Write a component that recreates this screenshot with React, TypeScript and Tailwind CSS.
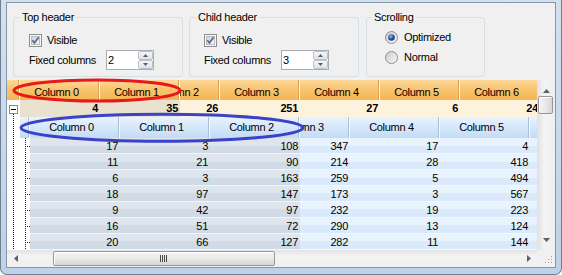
import React from "react";

type Dir = "up" | "down" | "left" | "right";

function Tri({ dir, w = 7, color = "#56616f" }: { dir: Dir; w?: number; color?: string }) {
  const h = Math.ceil(w / 2);
  if (dir === "up")
    return (
      <svg width={w} height={h} className="block">
        <polygon points={`0,${h} ${w / 2},0 ${w},${h}`} fill={color} />
      </svg>
    );
  if (dir === "down")
    return (
      <svg width={w} height={h} className="block">
        <polygon points={`0,0 ${w / 2},${h} ${w},0`} fill={color} />
      </svg>
    );
  if (dir === "left")
    return (
      <svg width={h} height={w} className="block">
        <polygon points={`${h},0 0,${w / 2} ${h},${w}`} fill={color} />
      </svg>
    );
  return (
    <svg width={h} height={w} className="block">
      <polygon points={`0,0 ${h},${w / 2} 0,${w}`} fill={color} />
    </svg>
  );
}

function Checkbox({ id }: { id: string }) {
  return (
    <svg width="13" height="13" className="block shrink-0">
      <defs>
        <linearGradient id={id} x1="0" y1="0" x2="1" y2="1">
          <stop offset="0" stopColor="#cfd3d8" />
          <stop offset="1" stopColor="#f6f6f6" />
        </linearGradient>
      </defs>
      <rect x="0.5" y="0.5" width="12" height="12" fill="#f7f7f7" stroke="#8e8f8f" />
      <rect x="2.5" y="2.5" width="8" height="8" fill={`url(#${id})`} stroke="#b9bdc3" />
      <path d="M3.3 6.3 L5.4 8.8 L9.6 3.2" stroke="#5b6883" strokeWidth="1.7" fill="none" />
    </svg>
  );
}

function Radio({ id, on }: { id: string; on?: boolean }) {
  return (
    <svg width="13" height="13" className="block shrink-0">
      <defs>
        <linearGradient id={`${id}b`} x1="0" y1="0" x2="1" y2="1">
          <stop offset="0" stopColor="#c8c8c8" />
          <stop offset="1" stopColor="#fbfbfb" />
        </linearGradient>
        <radialGradient id={`${id}d`} cx="0.4" cy="0.35" r="0.7">
          <stop offset="0" stopColor="#9cc2f2" />
          <stop offset="0.5" stopColor="#2c5cb8" />
          <stop offset="1" stopColor="#142f6e" />
        </radialGradient>
      </defs>
      <circle cx="6.5" cy="6.5" r="6" fill={`url(#${id}b)`} stroke="#8e8f8f" />
      {on && <circle cx="6.5" cy="6.5" r="3.3" fill={`url(#${id}d)`} />}
    </svg>
  );
}

function Spin({ value }: { value: string }) {
  return (
    <div className="w-[48px] h-[20px] flex border border-[#abadb3] bg-white shrink-0">
      <div className="flex-1 pl-[1px] flex items-center">{value}</div>
      <div className="w-[15px] flex flex-col">
        <div className="flex-1 flex items-center justify-center border border-[#b9c2cc] rounded-[2px] bg-[linear-gradient(#f6f6f6,#e2e2e2)]">
          <Tri dir="up" w={5} color="#4d6185" />
        </div>
        <div className="flex-1 flex items-center justify-center border border-[#b9c2cc] rounded-[2px] bg-[linear-gradient(#f6f6f6,#e2e2e2)]">
          <Tri dir="down" w={5} color="#4d6185" />
        </div>
      </div>
    </div>
  );
}

function HeaderGroup({
  title,
  value,
  pl,
  id,
}: {
  title: string;
  value: string;
  pl: "a" | "b";
  id: string;
}) {
  return (
    <fieldset className="w-[170px] h-[66px] shrink-0 border border-[#d5dfe5] rounded-[3px]">
      <legend className="ml-[6px] px-[2px] leading-[12px]">{title}</legend>
      <div className={pl === "a" ? "pl-[15px] pt-[11px]" : "pl-[14px] pt-[11px]"}>
        <div className="flex items-center h-[13px]">
          <Checkbox id={id} />
          <span className="ml-[5px]">Visible</span>
        </div>
        <div className="flex items-center h-[20px] mt-[3px]">
          <span className="w-[77px] shrink-0">Fixed columns</span>
          <Spin value={value} />
        </div>
      </div>
    </fieldset>
  );
}

function TopPanel() {
  return (
    <div className="h-[77px] shrink-0 flex items-start pl-[6px] pt-[8px]">
      <HeaderGroup title="Top header" value="2" pl="a" id="cb1" />
      <div className="ml-[6px]">
        <HeaderGroup title="Child header" value="3" pl="b" id="cb2" />
      </div>
      <fieldset className="ml-[7px] w-[119px] h-[66px] shrink-0 border border-[#d5dfe5] rounded-[3px]">
        <legend className="ml-[5px] px-[2px] leading-[12px]">Scrolling</legend>
        <div className="pl-[18px] pt-[8px] flex flex-col gap-[7px]">
          <div className="flex items-center h-[13px]">
            <Radio id="r1" on />
            <span className="ml-[6px]">Optimized</span>
          </div>
          <div className="flex items-center h-[13px]">
            <Radio id="r2" />
            <span className="ml-[6px]">Normal</span>
          </div>
        </div>
      </fieldset>
    </div>
  );
}

const OCELL =
  "w-[80px] shrink-0 h-full flex items-center justify-center pt-[4px] pr-[6px] bg-[linear-gradient(#fdd99c,#f9c56f_45%,#f5b553)] border-r border-[#fff0d6] shadow-[inset_-1px_0_0_#d4a560]";
const BCELL =
  "w-[90px] shrink-0 h-full flex items-center justify-center pr-[6px] bg-[linear-gradient(#e9f3fe,#d5e7fa_50%,#c3dbf4)] border-r border-[#f4f9ff] shadow-[inset_-1px_0_0_#a9bfd8]";
const SFIX = "w-[80px] shrink-0 h-full text-right pr-[2px] pt-[2px] font-bold bg-[#e9e2cf]";
const SSCR = "w-[80px] shrink-0 h-full text-right pr-[2px] pt-[2px] font-bold bg-[#fdf3dd]";
const DFIX =
  "w-[90px] shrink-0 h-full text-right pr-[2px] pt-[2px] border-b border-[#f2f5f8] bg-[linear-gradient(#dee5ec_0%,#dee5ec_50%,#d1dbe5_50%,#d1dbe5_100%)]";
const DSCR =
  "w-[90px] shrink-0 h-full text-right pr-[2px] pt-[2px] border-b border-[#f5f9fe] bg-[linear-gradient(#e9f3fd_0%,#e9f3fd_50%,#dbeafa_50%,#dbeafa_100%)]";

const sums = ["4", "35", "26", "251", "27", "6", "24"];
const rows = [
  ["17", "3", "108", "347", "17", "4", ""],
  ["11", "21", "90", "214", "28", "418", ""],
  ["6", "3", "163", "259", "5", "494", ""],
  ["18", "97", "147", "173", "3", "567", ""],
  ["9", "42", "97", "232", "19", "223", ""],
  ["16", "51", "72", "290", "13", "124", ""],
  ["20", "66", "127", "282", "11", "144", ""],
];

function DataRow({ v }: { v: string[] }) {
  return (
    <div className="h-[16px] flex shrink-0">
      {v.slice(0, 3).map((x, i) => (
        <div key={i} className={DFIX}>
          {x}
        </div>
      ))}
      <div className="w-[237px] shrink-0 overflow-hidden flex">
        <div className="flex ml-[-40px] shrink-0">
          {v.slice(3).map((x, i) => (
            <div key={i} className={DSCR}>
              {x}
            </div>
          ))}
        </div>
      </div>
    </div>
  );
}

function VScroll() {
  return (
    <div className="w-[18px] h-[170px] shrink-0 flex flex-col border-l border-[#e2e2e2] bg-[linear-gradient(to_right,#e3e3e3,#f3f3f3_35%,#efefef)]">
      <div className="h-[16px] flex items-end justify-center pb-[3px]">
        <Tri dir="up" />
      </div>
      <div className="w-[15px] h-[18px] rounded-[2px] border border-[#979797] bg-[linear-gradient(to_right,#f4f4f4,#e9e9e9_50%,#d5d5d5)] shadow-[inset_1px_1px_0_#ffffff]" />
      <div className="flex-1" />
      <div className="h-[17px] flex items-start justify-center pt-[5px]">
        <Tri dir="down" />
      </div>
    </div>
  );
}

function HScroll() {
  return (
    <div className="w-[530px] h-[17px] shrink-0 flex items-center bg-[linear-gradient(#e3e3e3,#f3f3f3_35%,#efefef)]">
      <div className="w-[17px] h-full flex items-center justify-center">
        <Tri dir="left" />
      </div>
      <div className="ml-[29px] w-[222px] h-[15px] shrink-0 rounded-[2px] border border-[#979797] bg-[linear-gradient(#f4f4f4,#e9e9e9_50%,#d5d5d5)] shadow-[inset_1px_1px_0_#ffffff] flex items-center justify-center">
        <svg width="8" height="7" className="block">
          {[0, 2, 4, 6].map((x) => (
            <rect key={x} x={x} y="0" width="1" height="7" fill="#4a4a4a" />
          ))}
        </svg>
      </div>
      <div className="flex-1" />
      <div className="w-[17px] h-full flex items-center justify-center">
        <Tri dir="right" />
      </div>
    </div>
  );
}

function Grip() {
  const dots = [
    [14, 6],
    [14, 9],
    [11, 9],
    [14, 12],
    [11, 12],
    [8, 12],
  ];
  return (
    <div className="w-[18px] h-[17px] bg-[#f0f0f0]">
      <svg width="18" height="17" className="block">
        {dots.map(([x, y], i) => (
          <g key={i}>
            <rect x={x + 1} y={y + 1} width="1" height="1" fill="#ffffff" />
            <rect x={x} y={y} width="1" height="1" fill="#9aa3ad" />
          </g>
        ))}
      </svg>
    </div>
  );
}

function Grid() {
  return (
    <div className="h-[187px] shrink-0 flex flex-col bg-white">
      <div className="h-[170px] flex">
        <div className="w-[530px] shrink-0 flex overflow-hidden">
          {/* tree / indicator column */}
          <div className="w-[13px] shrink-0 flex flex-col">
            <div className="h-[20px] bg-[linear-gradient(#fdd99c,#f9c56f_45%,#f5b553)] border-r border-[#fff0d6] shadow-[inset_-1px_0_0_#d4a560]" />
            <div className="h-[150px] bg-white">
              <svg width="13" height="150" className="block" shapeRendering="crispEdges">
                <line x1="6.5" y1="14" x2="6.5" y2="150" stroke="#222" strokeDasharray="1 1" />
                <rect x="2.5" y="5.5" width="8" height="8" fill="#ffffff" stroke="#8a8a8a" />
                <line x1="4" y1="9.5" x2="9" y2="9.5" stroke="#000" />
              </svg>
            </div>
          </div>
          <div className="w-[517px] shrink-0 flex flex-col">
            <div className="h-[20px] flex">
              <div className={OCELL}>Column 0</div>
              <div className={OCELL}>Column 1</div>
              <div className="w-[357px] shrink-0 overflow-hidden flex">
                <div className="flex ml-[-40px] shrink-0">
                  <div className={OCELL}>Column 2</div>
                  <div className={OCELL}>Column 3</div>
                  <div className={OCELL}>Column 4</div>
                  <div className={OCELL}>Column 5</div>
                  <div className={OCELL}>Column 6</div>
                </div>
              </div>
            </div>
            <div className="h-[17px] flex">
              <div className={SFIX}>{sums[0]}</div>
              <div className={SFIX}>{sums[1]}</div>
              <div className="w-[357px] shrink-0 overflow-hidden flex bg-[#fdf3dd]">
                <div className="flex ml-[-40px] shrink-0">
                  {sums.slice(2).map((s, i) => (
                    <div key={i} className={SSCR}>
                      {s}
                    </div>
                  ))}
                </div>
              </div>
            </div>
            <div className="h-[133px] flex">
              <div className="w-[10px] shrink-0 flex flex-col">
                <div className="h-[21px] bg-[linear-gradient(#e9f3fe,#d5e7fa_50%,#c3dbf4)] border-r border-[#f4f9ff] shadow-[inset_-1px_0_0_#a9bfd8]" />
                <div className="h-[112px] bg-white">
                  <svg width="10" height="112" className="block" shapeRendering="crispEdges">
                    <line x1="5.5" y1="0" x2="5.5" y2="112" stroke="#222" strokeDasharray="1 1" />
                    {rows.map((_, i) => (
                      <line
                        key={i}
                        x1="7"
                        y1={8.5 + 16 * i}
                        x2="10"
                        y2={8.5 + 16 * i}
                        stroke="#222"
                        strokeDasharray="1 1"
                      />
                    ))}
                  </svg>
                </div>
              </div>
              <div className="w-[507px] shrink-0 flex flex-col">
                <div className="h-[21px] flex shrink-0">
                  <div className={BCELL}>Column 0</div>
                  <div className={BCELL}>Column 1</div>
                  <div className={BCELL}>Column 2</div>
                  <div className="w-[237px] shrink-0 overflow-hidden flex">
                    <div className="flex ml-[-40px] shrink-0">
                      <div className={BCELL}>Column 3</div>
                      <div className={BCELL}>Column 4</div>
                      <div className={BCELL}>Column 5</div>
                      <div className={BCELL}>Column 6</div>
                    </div>
                  </div>
                </div>
                {rows.map((r, i) => (
                  <DataRow key={i} v={r} />
                ))}
              </div>
            </div>
          </div>
        </div>
        <VScroll />
      </div>
      <div className="h-[17px] flex">
        <HScroll />
        <Grip />
      </div>
    </div>
  );
}

export default function App() {
  return (
    <div className="relative w-[562px] h-[275px] overflow-hidden bg-[linear-gradient(to_bottom,#d3e1ef,#bdd2e8)] border-x border-b border-[#6f7f90] rounded-b-[7px] pt-[2px] px-[5px] pb-[6px] font-['Liberation_Sans',Arial,sans-serif] text-[11px] leading-[13px] tracking-[-0.3px] text-black">
      <div className="h-full flex flex-col border border-[#8697ab] bg-[#f0f0f0]">
        <TopPanel />
        <Grid />
      </div>
      <svg
        className="absolute left-[-1px] top-0 pointer-events-none"
        width="562"
        height="275"
      >
        <ellipse cx="97" cy="90.5" rx="83" ry="10.5" fill="none" stroke="#e8191b" strokeWidth="3" />
        <ellipse cx="162" cy="127.7" rx="141" ry="13.5" fill="none" stroke="#3a42c8" strokeWidth="3" />
      </svg>
    </div>
  );
}
